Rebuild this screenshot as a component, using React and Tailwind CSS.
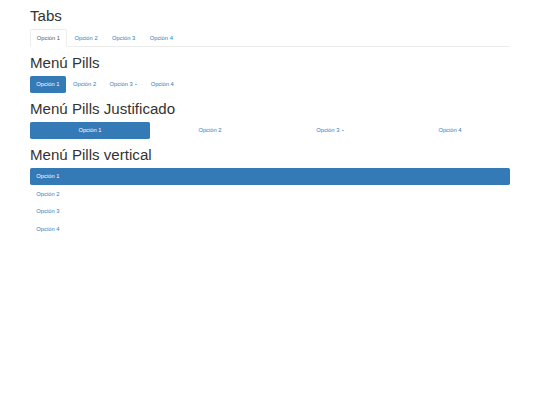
import { useState } from 'react';

const options = ['Opción 1', 'Opción 2', 'Opción 3', 'Opción 4'];

function Caret() {
  return (
    <span className="ml-[0.84px] inline-block h-0 w-0 border-x-[1.7px] border-t-[1.7px] border-x-transparent border-t-current align-middle" />
  );
}

function Label({ name, dropdown }) {
  return (
    <>
      {name}
      {dropdown && (
        <>
          {' '}
          <Caret />
        </>
      )}
    </>
  );
}

function Heading({ children }) {
  return (
    <h1 className="mt-[8.4px] mb-[4.2px] text-[15.1px] leading-[16.6px] font-normal text-[#333]">
      {children}
    </h1>
  );
}

function Tabs() {
  const [active, setActive] = useState(0);
  return (
    <ul className="flex border-b border-[#ececec]">
      {options.map((name, i) => (
        <li key={name} className="-mb-px mr-[0.84px]">
          <a
            href="#"
            onClick={(e) => {
              e.preventDefault();
              setActive(i);
            }}
            className={
              i === active
                ? 'block rounded-t-[1.7px] border border-[#ececec] border-b-white bg-white px-[5.8px] py-[3.6px] leading-[8.4px] text-[#555]'
                : 'block rounded-t-[1.7px] border border-transparent px-[5.8px] py-[3.6px] leading-[8.4px] text-[#337ab7]'
            }
          >
            {name}
          </a>
        </li>
      ))}
    </ul>
  );
}

function Pills({ justified, stacked, dropdown }) {
  const [active, setActive] = useState(0);
  let ul = 'flex gap-[0.84px]';
  if (justified) ul = 'grid grid-cols-4';
  if (stacked) ul = 'flex flex-col gap-[0.84px]';
  return (
    <ul className={ul}>
      {options.map((name, i) => (
        <li key={name}>
          <a
            href="#"
            onClick={(e) => {
              e.preventDefault();
              setActive(i);
            }}
            className={
              'block rounded-[1.7px] px-[6.3px] py-[4.2px] leading-[8.4px] ' +
              (justified ? 'text-center ' : '') +
              (i === active ? 'bg-[#337ab7] text-white' : 'text-[#337ab7]')
            }
          >
            <Label name={name} dropdown={dropdown && i === 2} />
          </a>
        </li>
      ))}
    </ul>
  );
}

export default function App() {
  return (
    <div className="min-h-[405px] bg-white font-['Liberation_Sans',Arial,sans-serif] text-[5.8px]">
      <div className="mx-auto flow-root w-[480px]">
        <Heading>Tabs</Heading>
        <Tabs />
        <Heading>Menú Pills</Heading>
        <Pills dropdown />
        <Heading>Menú Pills Justificado</Heading>
        <Pills justified dropdown />
        <Heading>Menú Pills vertical</Heading>
        <Pills stacked />
      </div>
    </div>
  );
}
